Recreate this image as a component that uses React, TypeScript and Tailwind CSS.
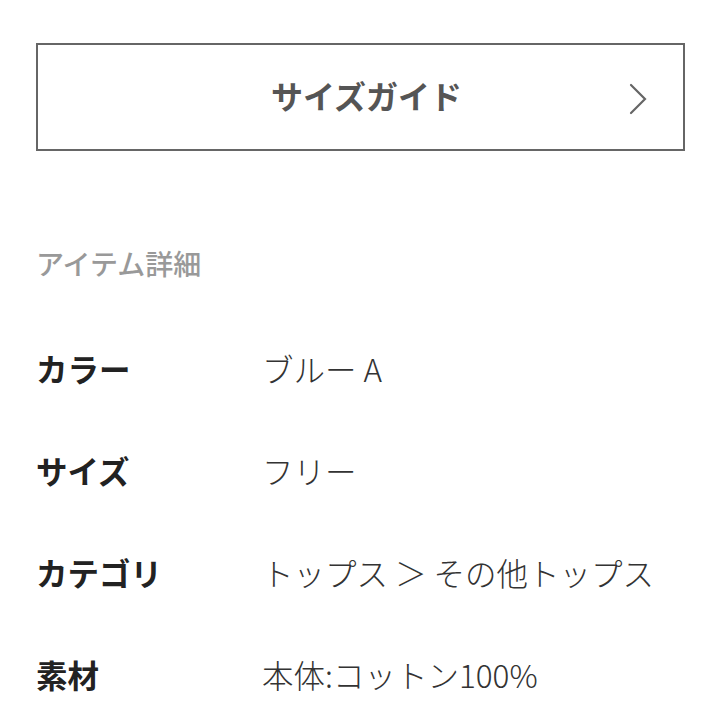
import React from "react";

const font = { fontFamily: '"Noto Sans CJK JP", "Noto Sans", sans-serif' };

const rows: [string, string][] = [
  ["カラー", "ブルー A"],
  ["サイズ", "フリー"],
  ["カテゴリ", "トップス ＞ その他トップス"],
  ["素材", "本体:コットン100%"],
];

export default function App() {
  return (
    <div className="w-[721px] h-[721px] bg-white overflow-hidden" style={font}>
      <div className="pt-[43px] px-[36px]">
        <div className="relative h-[108px] border-2 border-[#666666] flex items-center justify-center">
          <span className="text-[32px] font-bold text-[#555555] leading-none ml-[12px] -mt-[4px]">サイズガイド</span>
          <svg className="absolute right-[35px] top-[38px]" width="20" height="32" viewBox="0 0 20 32" fill="none">
            <path d="M3 2 L17 16 L3 30" stroke="#666666" strokeWidth="2.2" strokeLinecap="round" strokeLinejoin="miter" />
          </svg>
        </div>
        <div className="mt-[98px] text-[28px] text-[#999999] font-medium leading-none">アイテム詳細</div>
        <div className="mt-[72px] flex flex-col gap-[62px]">
          {rows.map(([k, v]) => (
            <div key={k} className="flex items-center h-[40px]">
              <div className="w-[226px] text-[31.5px] font-bold text-[#222222] leading-none">{k}</div>
              <div className="text-[31.5px] font-light text-[#333333] leading-none">{v}</div>
            </div>
          ))}
        </div>
      </div>
    </div>
  );
}
